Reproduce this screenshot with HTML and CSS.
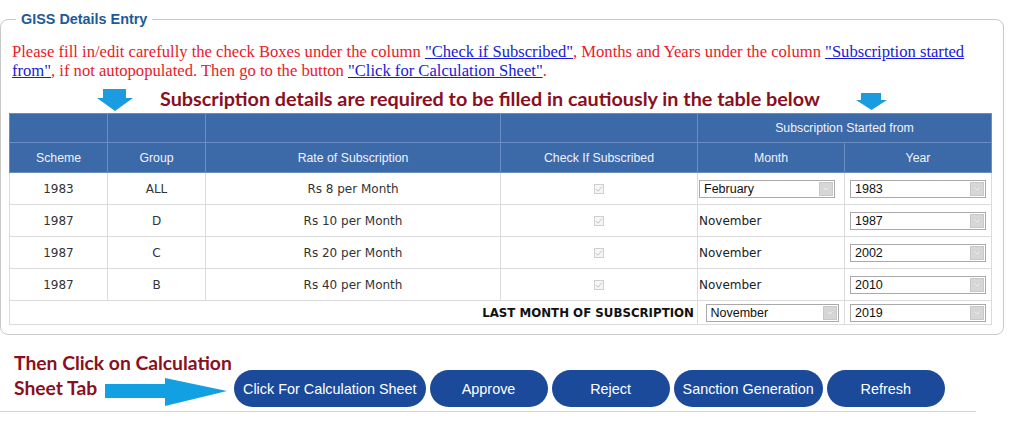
FILE: index.html
```html
<!DOCTYPE html>
<html>
<head>
<meta charset="utf-8">
<link rel="stylesheet" href="styles.css">
</head>
<body>
<fieldset class="giss">
  <legend class="giss-legend">GISS Details Entry</legend>
  <p class="note">Please fill in/edit carefully the check Boxes under the column <a href="#">"Check if Subscribed"</a>, Months and Years under the column <a href="#">"Subscription started from"</a>, if not autopopulated. Then go to the button <a href="#">"Click for Calculation Sheet"</a>.</p>
  <div class="callout">
    <svg class="arrow-down" width="36" height="22" viewBox="0 0 36 22"><path d="M6 0H29V9H36L18 22L0 9H6Z" fill="#1b9be0"/></svg>
    <span class="callout-text">Subscription details are required to be filled in cautiously in the table below</span>
    <svg class="arrow-down small" width="31" height="17" viewBox="0 0 31 17"><path d="M5 0H25V7H31L15.5 17L0 7H5Z" fill="#1b9be0"/></svg>
  </div>
  <table class="grid">
    <colgroup>
      <col class="c1"><col class="c2"><col class="c3"><col class="c4"><col class="c5"><col class="c6">
    </colgroup>
    <thead>
      <tr class="h1">
        <th></th><th></th><th></th><th></th>
        <th colspan="2">Subscription Started from</th>
      </tr>
      <tr class="h2">
        <th>Scheme</th><th>Group</th><th>Rate of Subscription</th><th>Check If Subscribed</th><th>Month</th><th>Year</th>
      </tr>
    </thead>
    <tbody>
      <tr>
        <td>1983</td><td>ALL</td><td>Rs 8 per Month</td>
        <td><span class="chk"><svg width="8" height="8" viewBox="0 0 8 8"><path d="M1 4.2L3 6.2L7 1.5" fill="none" stroke="#c4c4c4" stroke-width="1"/></svg></span></td>
        <td class="left"><span class="sel month1">February<span class="caret"><svg width="6" height="4" viewBox="0 0 6 4"><path d="M0.5 0.5L3 3L5.5 0.5" fill="none" stroke="#f2f2f2" stroke-width="0.8"/></svg></span></span></td>
        <td><span class="sel">1983<span class="caret"><svg width="6" height="4" viewBox="0 0 6 4"><path d="M0.5 0.5L3 3L5.5 0.5" fill="none" stroke="#f2f2f2" stroke-width="0.8"/></svg></span></span></td>
      </tr>
      <tr>
        <td>1987</td><td>D</td><td>Rs 10 per Month</td>
        <td><span class="chk"><svg width="8" height="8" viewBox="0 0 8 8"><path d="M1 4.2L3 6.2L7 1.5" fill="none" stroke="#c4c4c4" stroke-width="1"/></svg></span></td>
        <td class="left">November</td>
        <td><span class="sel">1987<span class="caret"><svg width="6" height="4" viewBox="0 0 6 4"><path d="M0.5 0.5L3 3L5.5 0.5" fill="none" stroke="#f2f2f2" stroke-width="0.8"/></svg></span></span></td>
      </tr>
      <tr>
        <td>1987</td><td>C</td><td>Rs 20 per Month</td>
        <td><span class="chk"><svg width="8" height="8" viewBox="0 0 8 8"><path d="M1 4.2L3 6.2L7 1.5" fill="none" stroke="#c4c4c4" stroke-width="1"/></svg></span></td>
        <td class="left">November</td>
        <td><span class="sel">2002<span class="caret"><svg width="6" height="4" viewBox="0 0 6 4"><path d="M0.5 0.5L3 3L5.5 0.5" fill="none" stroke="#f2f2f2" stroke-width="0.8"/></svg></span></span></td>
      </tr>
      <tr>
        <td>1987</td><td>B</td><td>Rs 40 per Month</td>
        <td><span class="chk"><svg width="8" height="8" viewBox="0 0 8 8"><path d="M1 4.2L3 6.2L7 1.5" fill="none" stroke="#c4c4c4" stroke-width="1"/></svg></span></td>
        <td class="left">November</td>
        <td><span class="sel">2010<span class="caret"><svg width="6" height="4" viewBox="0 0 6 4"><path d="M0.5 0.5L3 3L5.5 0.5" fill="none" stroke="#f2f2f2" stroke-width="0.8"/></svg></span></span></td>
      </tr>
      <tr class="last">
        <td colspan="4" class="last-label">LAST MONTH OF SUBSCRIPTION</td>
        <td><span class="sel month2">November<span class="caret"><svg width="6" height="4" viewBox="0 0 6 4"><path d="M0.5 0.5L3 3L5.5 0.5" fill="none" stroke="#f2f2f2" stroke-width="0.8"/></svg></span></span></td>
        <td><span class="sel">2019<span class="caret"><svg width="6" height="4" viewBox="0 0 6 4"><path d="M0.5 0.5L3 3L5.5 0.5" fill="none" stroke="#f2f2f2" stroke-width="0.8"/></svg></span></span></td>
      </tr>
    </tbody>
  </table>
</fieldset>
<div class="actions">
  <div class="hint">
    <div class="hint-line first">Then Click on Calculation</div>
    <div class="hint-line row"><span class="hint-text">Sheet Tab</span>
      <svg class="arrow-right" width="122" height="28" viewBox="0 0 122 28"><path d="M0 6H60V0L122 13L60 28V20H0Z" fill="#12a0e2"/></svg>
    </div>
  </div>
  <div class="buttons">
    <button class="btn">Click For Calculation Sheet</button>
    <button class="btn">Approve</button>
    <button class="btn">Reject</button>
    <button class="btn">Sanction Generation</button>
    <button class="btn">Refresh</button>
  </div>
</div>
</body>
</html>
```

FILE: styles.css
```css
html, body {
  margin: 0;
  padding: 0;
  background: #ffffff;
}

.giss {
  box-sizing: border-box;
  width: 1004px;
  margin: 11px 0 0 0;
  padding: 0 11px 9px 8px;
  border: 1px solid #c9c9c9;
  border-radius: 8px;
  min-width: 0;
}

.giss-legend {
  margin-left: 7px;
  padding: 0 5px;
  font-family: "Liberation Sans", Arial, sans-serif;
  font-weight: bold;
  font-size: 14.4px;
  line-height: 17px;
  color: #1d5a98;
}

.note {
  margin: 14px 0 0 3px;
  width: 985px;
  font-family: "Liberation Serif", "Times New Roman", serif;
  font-size: 16.6px;
  line-height: 19px;
  color: #e8202a;
}

.note a {
  color: #1a1ad6;
  text-decoration: underline;
}

.callout {
  display: flex;
  align-items: flex-end;
  height: 25px;
  margin-top: 6px;
  padding-left: 88px;
}

.arrow-down {
  display: block;
}

.arrow-down.small {
  margin-left: 36px;
  margin-bottom: 1px;
}

.callout-text {
  margin-left: 27px;
  font-family: Lato, "Open Sans", sans-serif;
  font-weight: bold;
  font-size: 19.8px;
  line-height: 25px;
  color: #8a0f20;
  white-space: nowrap;
}

.grid {
  margin-top: 2px;
  width: 982px;
  border-collapse: collapse;
  table-layout: fixed;
  border: 1px solid #dcdcdc;
}

.c1, .c2 { width: 98px; }
.c3 { width: 295px; }
.c4 { width: 197px; }
.c5, .c6 { width: 147px; }

.grid th {
  background: #3c69a8;
  color: #eef3fa;
  font-family: "Liberation Sans", Arial, sans-serif;
  font-weight: normal;
  font-size: 12.3px;
  text-align: center;
  border: 1px solid #6a8ec4;
  padding: 0;
}

.grid tr.h1 th { height: 28px; }
.grid tr.h2 th { height: 29px; }

.grid td {
  height: 31px;
  padding: 0;
  text-align: center;
  border: 1px solid #dcdcdc;
  font-family: "DejaVu Sans", Verdana, sans-serif;
  font-size: 12px;
  color: #333333;
}

.grid td.left {
  text-align: left;
  padding-left: 1px;
  color: #222222;
}

.grid tr.last td { height: 23px; }

.grid td.last-label {
  text-align: right;
  padding-right: 3px;
  font-weight: bold;
  font-size: 11.8px;
  color: #111111;
}

.chk {
  display: inline-flex;
  align-items: center;
  justify-content: center;
  box-sizing: border-box;
  width: 10px;
  height: 10px;
  border: 1px solid #cfcfcf;
  background: #f6f6f6;
  vertical-align: middle;
}

.chk svg { display: block; }

.sel {
  display: inline-flex;
  align-items: center;
  justify-content: space-between;
  box-sizing: border-box;
  width: 136px;
  height: 18px;
  padding: 0 1px 0 4px;
  border: 1px solid #a9a9a9;
  background: #ffffff;
  font-family: "Liberation Sans", Arial, sans-serif;
  font-size: 12.5px;
  color: #111111;
  vertical-align: middle;
  text-align: left;
}

.sel.month2 { width: 133px; margin-left: 2px; }

.caret {
  display: flex;
  align-items: center;
  justify-content: center;
  width: 14px;
  height: 14px;
  background: #d6d6d6;
  border: 1px solid #c8c8c8;
  box-sizing: border-box;
}

.caret svg { display: block; }

.actions {
  display: flex;
  align-items: flex-end;
  width: 976px;
  height: 77px;
  padding-bottom: 4px;
  box-sizing: border-box;
  border-bottom: 1px solid #d2d2d2;
}

.hint {
  margin-left: 14px;
  margin-bottom: 1px;
  width: 220px;
  font-family: Lato, "Open Sans", sans-serif;
  font-weight: bold;
  font-size: 19.3px;
  line-height: 25px;
  color: #8a0f20;
}

.hint-line { white-space: nowrap; }

.hint-line.first { margin-bottom: 3px; }

.hint-line.row {
  display: flex;
  align-items: flex-start;
  height: 28px;
}

.hint-text { line-height: 20px; }

.arrow-right {
  display: block;
  margin-left: 8px;
}

.buttons {
  display: flex;
  gap: 4px;
}

.btn {
  height: 37px;
  min-width: 118px;
  padding: 0 9px;
  border: none;
  border-radius: 19px;
  background: #1c4a9b;
  color: #ffffff;
  font-family: "Liberation Sans", Arial, sans-serif;
  font-size: 14.4px;
  cursor: pointer;
}
```
